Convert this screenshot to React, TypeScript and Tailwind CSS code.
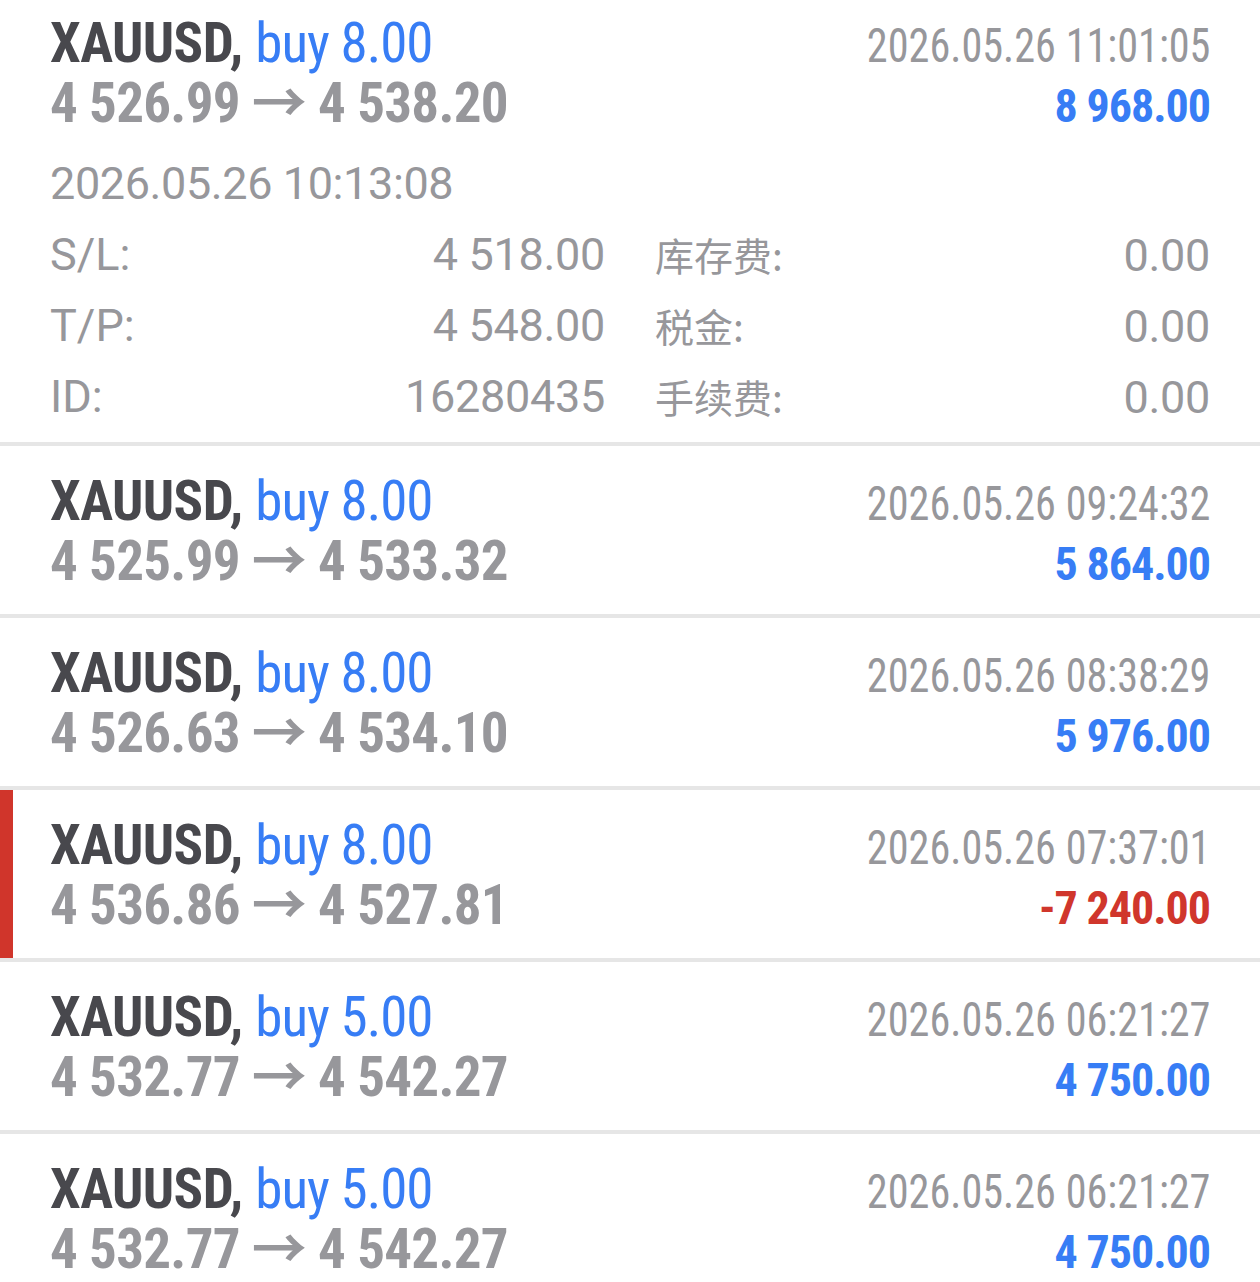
import React from 'react';

type Deal = {
  symbol: string;
  side: string;
  open: string;
  close: string;
  time: string;
  profit: string;
  loss?: boolean;
};

const deals: Deal[] = [
  { symbol: 'XAUUSD', side: 'buy 8.00', open: '4 525.99', close: '4 533.32', time: '2026.05.26 09:24:32', profit: '5 864.00' },
  { symbol: 'XAUUSD', side: 'buy 8.00', open: '4 526.63', close: '4 534.10', time: '2026.05.26 08:38:29', profit: '5 976.00' },
  { symbol: 'XAUUSD', side: 'buy 8.00', open: '4 536.86', close: '4 527.81', time: '2026.05.26 07:37:01', profit: '-7 240.00', loss: true },
  { symbol: 'XAUUSD', side: 'buy 5.00', open: '4 532.77', close: '4 542.27', time: '2026.05.26 06:21:27', profit: '4 750.00' },
  { symbol: 'XAUUSD', side: 'buy 5.00', open: '4 532.77', close: '4 542.27', time: '2026.05.26 06:21:27', profit: '4 750.00' },
];

const cond = "font-['Roboto_Condensed',Roboto,'Noto_Sans_CJK_SC',sans-serif] [font-stretch:condensed]";

function Summary({ d }: { d: Deal }) {
  return (
    <div className={cond}>
      <div className="flex items-baseline justify-between h-[60px] leading-[60px]">
        <div className="text-[55px] whitespace-nowrap">
          <span className="font-bold text-[#48484d] tracking-[-0.6px]">{d.symbol},</span>{' '}
          <span className="text-[#377df5] tracking-[-1px]">{d.side}</span>
        </div>
        <div className="text-[48px] text-[#97979b] whitespace-nowrap inline-block origin-right scale-x-[0.88]">
          {d.time}
        </div>
      </div>
      <div className="flex items-baseline justify-between h-[60px] leading-[60px]">
        <div className="text-[55px] font-bold text-[#97979b] whitespace-nowrap tracking-[-0.7px]">
          {d.open} → {d.close}
        </div>
        <div
          className={`text-[46px] font-bold whitespace-nowrap tracking-[-1px] ${d.loss ? 'text-[#d0362c]' : 'text-[#377df5]'}`}
        >
          {d.profit}
        </div>
      </div>
    </div>
  );
}

function Detail({ label, value, cjk }: { label: string; value: string; cjk?: boolean }) {
  return (
    <div className="flex items-baseline justify-between h-[71px] leading-[71px]">
      <span className={cjk ? "text-[39px] font-['Noto_Sans_CJK_SC',sans-serif]" : 'text-[45px]'}>{label}</span>
      <span className="text-[45px] tracking-[-0.3px]">{value}</span>
    </div>
  );
}

export default function App() {
  return (
    <div className="bg-white min-h-screen w-[1260px] overflow-hidden">
      {/* expanded position */}
      <div className="px-[50px] pt-[13px] pb-[10px]">
        <Summary
          d={{ symbol: 'XAUUSD', side: 'buy 8.00', open: '4 526.99', close: '4 538.20', time: '2026.05.26 11:01:05', profit: '8 968.00' }}
        />
        <div className="mt-[15px] font-['Roboto',sans-serif] text-[#97979b]">
          <div className="h-[71px] leading-[71px] text-[45px] tracking-[-0.4px]">2026.05.26 10:13:08</div>
          <div className="grid grid-cols-2 gap-x-[50px]">
            <Detail label="S/L:" value="4 518.00" />
            <Detail label="库存费:" value="0.00" cjk />
            <Detail label="T/P:" value="4 548.00" />
            <Detail label="税金:" value="0.00" cjk />
            <Detail label="ID:" value="16280435" />
            <Detail label="手续费:" value="0.00" cjk />
          </div>
        </div>
      </div>
      <div className="h-[4px] bg-[#e6e6e6]" />

      {deals.map((d, i) => (
        <div key={i}>
          <div
            className={`h-[168px] pt-[25px] pr-[50px] ${d.loss ? 'border-l-[13px] border-[#d0352b] pl-[37px]' : 'pl-[50px]'}`}
          >
            <Summary d={d} />
          </div>
          <div className="h-[4px] bg-[#e6e6e6]" />
        </div>
      ))}
    </div>
  );
}
